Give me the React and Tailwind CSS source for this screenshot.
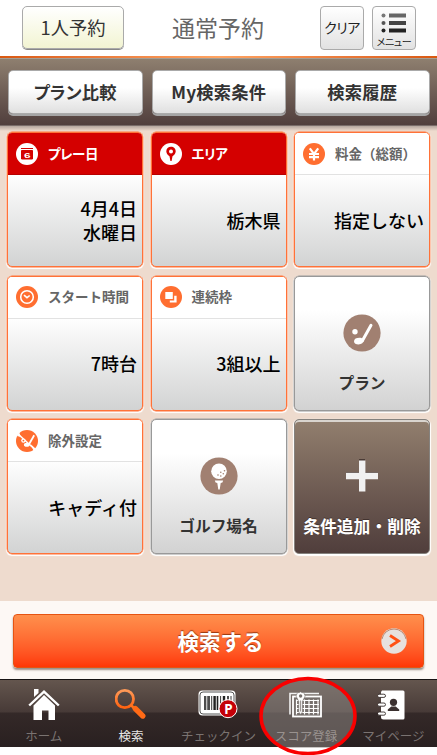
import React from 'react';

const CalendarIcon = () => (
  <svg viewBox="0 0 22 22" className="w-[22px] h-[22px]">
    <circle cx="11" cy="11" r="11" fill="#fff" />
    <path d="M5 5.5H17" stroke="#d40000" strokeWidth="1.2" />
    <path d="M5.5 7.5H16.5V16H5.5Z" fill="#d40000" stroke="#d40000" strokeWidth="1" />
    <text x="11" y="15" fill="#fff" fontSize="8" fontWeight="700" textAnchor="middle" textLength="6" lengthAdjust="spacingAndGlyphs" fontFamily="Liberation Sans, sans-serif">6</text>
  </svg>
);

const PinIcon = () => (
  <svg viewBox="0 0 22 22" className="w-[22px] h-[22px]">
    <circle cx="11" cy="11" r="11" fill="#fff" />
    <path fillRule="evenodd" d="M11 3.8C8.2 3.8 6.3 5.9 6.3 8.4C6.3 10.8 8.4 12.2 9.5 13.2L10.4 18H11.6L12.5 13.2C13.6 12.2 15.7 10.8 15.7 8.4C15.7 5.9 13.8 3.8 11 3.8ZM11 6.4A2 2 0 1 1 11 10.4A2 2 0 1 1 11 6.4Z" fill="#d40000" />
  </svg>
);

const YenIcon = () => (
  <svg viewBox="0 0 22 22" className="w-[22px] h-[22px]">
    <circle cx="11" cy="11" r="11" fill="#ff6e30" />
    <path d="M6.8 5.3L11 11L15.2 5.3M11 10.5V17.5M6 11H16M6 14.2H16" fill="none" stroke="#fff" strokeWidth="2.2" />
  </svg>
);

const ClockIcon = () => (
  <svg viewBox="0 0 22 22" className="w-[22px] h-[22px]">
    <circle cx="11" cy="11" r="11" fill="#ff6e30" />
    <circle cx="11" cy="11" r="6.3" fill="none" stroke="#fff" strokeWidth="1.6" />
    <path d="M8 9.2L11 11.7L13.7 9.5" fill="none" stroke="#fff" strokeWidth="1.6" />
  </svg>
);

const FramesIcon = () => (
  <svg viewBox="0 0 22 22" className="w-[22px] h-[22px]">
    <circle cx="11" cy="11" r="11" fill="#ff6e30" />
    <path d="M5.3 6H12.8V13H5.3Z" fill="#fff" />
    <path d="M14.2 9.8H16.6V16.4H9.8V14.4H14.2Z" fill="#fff" />
  </svg>
);

const ExcludeIcon = () => (
  <svg viewBox="0 0 22 22" className="w-[22px] h-[22px]">
    <circle cx="11" cy="11" r="11" fill="#ff6e30" />
    <path d="M1.5 3.5L20 20.5" stroke="#fff" strokeWidth="1.6" />
    <path d="M3 2L5 7L1 6Z" fill="#fff" />
    <path d="M18.2 5.2L13 14.2" stroke="#fff" strokeWidth="1.8" />
    <ellipse cx="10.8" cy="14.8" rx="2.9" ry="2" fill="#fff" />
    <circle cx="7.4" cy="10.6" r="2.2" fill="#fff" />
    <circle cx="7.4" cy="10.6" r="0.9" fill="#ff6e30" />
    <path d="M14.5 14L20.5 19.5L17.5 20.5Z" fill="#fff" />
  </svg>
);

const ClubIcon = () => (
  <svg viewBox="0 0 38 38" className="w-[38px] h-[38px]">
    <circle cx="19" cy="19" r="18.6" fill="#a18071" />
    <circle cx="12" cy="17.7" r="2.7" fill="#fff" />
    <path d="M28 11.2L19.5 26.5" stroke="#fff" strokeWidth="3" strokeLinecap="round" />
    <path d="M18.5 24C14.5 23.4 11 24.6 11 27.2C11 29.5 13 30.4 15.5 30.4C18.8 30.4 20.3 28.5 21 26.5Z" fill="#fff" />
  </svg>
);

const GolfBallIcon = () => (
  <svg viewBox="0 0 38 38" className="w-[38px] h-[38px]">
    <circle cx="19" cy="19" r="18.6" fill="#a18071" />
    <circle cx="19" cy="14.3" r="7.8" fill="#fff" />
    <g fill="#a18071">
      <circle cx="24.5" cy="13.8" r="0.8" />
      <circle cx="23.3" cy="16.8" r="0.8" />
      <circle cx="20.8" cy="15.3" r="0.8" />
      <circle cx="20.8" cy="19" r="0.8" />
      <circle cx="18" cy="18" r="0.8" />
    </g>
    <path d="M14.8 23.4H23.2L22.4 25.4L20.7 26L19.7 32.5H18.3L17.3 26L15.6 25.4Z" fill="#fff" />
  </svg>
);

const PlusIcon = () => (
  <svg viewBox="0 0 34 34" className="w-[34px] h-[34px]">
    <path d="M14 0H20V13H33V19H20V32H14V19H1V13H14Z" fill="#4a3b36" />
    <path d="M14 1.4H20.4V13.8H33V20.2H20.4V32.6H14V20.2H1V13.8H14Z" fill="#f1f1f1" />
  </svg>
);

const HomeIcon = () => (
  <svg viewBox="0 0 32 32" className="w-8 h-8">
    <path d="M6 1H10.5V5L6 9Z" fill="#fff" />
    <path d="M1.2 17.5L16 3.6L30.8 17.5" fill="none" stroke="#fff" strokeWidth="2.4" />
    <path d="M16 7L27 17.5V32H20.5V22.5H14V32H5.5V17.5Z" fill="#fff" />
  </svg>
);

const SearchIcon = () => (
  <svg viewBox="0 0 32 32" className="w-8 h-8">
    <defs>
      <linearGradient id="lens" x1="0" y1="0" x2="0" y2="1">
        <stop offset="0" stopColor="#ff9a58" />
        <stop offset="1" stopColor="#ff6210" />
      </linearGradient>
    </defs>
    <circle cx="9.8" cy="11" r="8.7" fill="none" stroke="url(#lens)" strokeWidth="2.8" />
    <path d="M15.8 17L19 20" stroke="#ff741f" strokeWidth="2.6" />
    <path d="M20.2 20.5L27.8 28" stroke="#ff6a16" strokeWidth="5.4" strokeLinecap="round" />
  </svg>
);

const CheckinIcon = () => (
  <svg viewBox="0 0 42 32" className="w-[42px] h-8">
    <rect x="0.5" y="2.5" width="37" height="25" rx="4" fill="#fff" />
    <rect x="2" y="4" width="34" height="22" rx="3" fill="none" stroke="#555" strokeWidth="1" />
    <path d="M7 8V22M11 8V22M19.5 8V22M30 8V22" stroke="#222" strokeWidth="1.6" />
    <path d="M9.2 8V22M13.7 8V22M22.6 8V22M33 8V22" stroke="#222" strokeWidth="0.9" />
    <path d="M16.6 8V22M26 8V22" stroke="#222" strokeWidth="2.4" />
    <circle cx="30" cy="20.7" r="9" fill="#c40008" stroke="#fff" strokeWidth="1" />
    <text x="30.4" y="25.6" fill="#fff" fontSize="13.5" fontWeight="700" textAnchor="middle" fontFamily="Noto Sans, sans-serif">P</text>
  </svg>
);

const ScoreIcon = () => (
  <svg viewBox="0 0 34 32" className="w-[34px] h-8">
    <path d="M1 26.5V5.5H30" fill="none" stroke="#f2f2f2" strokeWidth="1.6" />
    <rect x="4" y="8.5" width="28" height="20" fill="#77706d" stroke="#fff" strokeWidth="1.8" />
    <path d="M7 12.5H30M7 16.5H30M7 20.5H30M7 24.5H30" stroke="#fff" strokeWidth="1.2" />
    <path d="M7.5 11.5V26.5M15.5 11.5V26.5M20 11.5V26.5M24.5 11.5V26.5M29 11.5V26.5" stroke="#fff" strokeWidth="1.2" />
    <path d="M11.6 3.8Q13 5.2 14.6 4.4L16.2 8L13.4 13.5V24L11.6 26.5L9.8 24V13.5L7 8L8.6 4.4Q10.2 5.2 11.6 3.8Z" fill="#fff" stroke="#77706d" strokeWidth="0.6" />
    <circle cx="11.6" cy="8" r="1.7" fill="#77706d" />
    <path d="M11.6 12.5V23.5" stroke="#77706d" strokeWidth="0.8" />
  </svg>
);

const AddressIcon = () => (
  <svg viewBox="0 0 30 32" className="w-[30px] h-8">
    <path d="M4 2.5H25Q26.5 2.5 26.5 4V30Q26.5 31.5 25 31.5H5.5Q3 31.5 3 29V4Z" fill="#fff" />
    <g fill="#fff" stroke="#332a29" strokeWidth="0.9">
      <rect x="-0.5" y="6.2" width="8" height="3.2" rx="1.6" />
      <rect x="-0.5" y="15" width="8" height="3.2" rx="1.6" />
      <rect x="-0.5" y="24" width="8" height="3.2" rx="1.6" />
    </g>
    <circle cx="15.5" cy="14.3" r="3.6" fill="#3a302f" />
    <path d="M9.8 23V21.5L13.3 18.5H17.7L21.2 21.5V23Z" fill="#3a302f" />
  </svg>
);

const tabs = ['プラン比較', 'My検索条件', '検索履歴'];

const conditions = [
  { label: 'プレー日', icon: CalendarIcon, value: ['4月4日', '水曜日'], required: true },
  { label: 'エリア', icon: PinIcon, value: ['栃木県'], required: true },
  { label: '料金（総額）', icon: YenIcon, value: ['指定しない'] },
  { label: 'スタート時間', icon: ClockIcon, value: ['7時台'] },
  { label: '連続枠', icon: FramesIcon, value: ['3組以上'] },
  { label: 'プラン', icon: ClubIcon },
  { label: '除外設定', icon: ExcludeIcon, value: ['キャディ付'] },
  { label: 'ゴルフ場名', icon: GolfBallIcon },
];

const navItems = [
  { label: 'ホーム', icon: HomeIcon },
  { label: '検索', icon: SearchIcon, active: true },
  { label: 'チェックイン', icon: CheckinIcon },
  { label: 'スコア登録', icon: ScoreIcon, marked: true },
  { label: 'マイページ', icon: AddressIcon },
];

function ConditionCard({ item }) {
  const Icon = item.icon;
  if (!item.value) {
    return (
      <button className="flex flex-col items-center h-[135px] pt-[37px] rounded-[5px] border border-[#999] bg-linear-to-b from-white from-25% to-[#d2d2d2] shadow-[0_0_0_0.4px_#999,0_1px_1px_1px_#fff]">
        <Icon />
        <span className="mt-[21px] text-[15.7px] leading-[20px] font-bold text-[#333] whitespace-nowrap">{item.label}</span>
      </button>
    );
  }
  return (
    <button className="flex flex-col h-[135px] rounded-[5px] border border-[#ff7238] overflow-hidden bg-linear-to-b from-white from-30% to-[#d2d3d3] shadow-[0_0_0_0.4px_#ff7238,0_1px_1px_1px_#fff]">
      <div
        className={`flex items-center gap-[10px] w-full h-[42px] shrink-0 pl-[8px] border-b ${
          item.required
            ? 'bg-[#d40000] border-[#b80000] text-white tracking-[-0.4px] [font-feature-settings:"palt"]'
            : 'bg-white border-[#e2e2e2] text-[#666]'
        }`}
      >
        <Icon />
        <span className="text-[13.5px] leading-none font-bold whitespace-nowrap">{item.label}</span>
      </div>
      <div className="flex flex-1 flex-col items-end justify-center w-full pr-[5px] text-[18px] leading-[23.5px] font-medium text-black whitespace-nowrap">
        {item.value.map(line => (
          <span key={line}>{line}</span>
        ))}
      </div>
    </button>
  );
}

export default function App() {
  return (
    <div className="flex flex-col w-[437px] h-[755px] overflow-hidden bg-white font-['Noto_Sans_CJK_JP',sans-serif]">
      <header className="flex h-14 shrink-0 pl-[22px] pt-[6px]">
        <button className="flex items-center justify-center w-[102px] h-[43px] rounded-[5px] border border-[#aaa] bg-linear-to-b from-white to-[#f2f4d2] text-[18.3px] leading-none text-[#333] shadow-[0_1px_0_#888]">
          1人予約
        </button>
        <h1 className="w-[196px] pl-[48px] pt-[8px] text-[23px] leading-[26px] font-normal text-[#666] whitespace-nowrap">通常予約</h1>
        <button className="flex items-center justify-center w-[44px] h-[44px] pb-[3px] rounded-[4px] border border-[#aaa] bg-linear-to-b from-white to-[#e2e2e2] text-[14px] leading-none tracking-[-0.4px] text-[#222] [font-feature-settings:'palt']">
          クリア
        </button>
        <button className="flex flex-col items-center w-[44px] h-[44px] ml-2 pt-[6px] rounded-[4px] border border-[#aaa] bg-linear-to-b from-white to-[#e2e2e2]">
          <svg viewBox="0 0 26 20" className="w-[26px] h-5">
            <circle cx="2.5" cy="2.5" r="2" fill="#777" />
            <circle cx="2.5" cy="10" r="2" fill="#555" />
            <circle cx="2.5" cy="17.5" r="2" fill="#222" />
            <path d="M8 2.5H25" stroke="#666" strokeWidth="4" />
            <path d="M8 10H25" stroke="#444" strokeWidth="4" />
            <path d="M8 17.5H25" stroke="#222" strokeWidth="4" />
          </svg>
          <span className="mt-[3px] text-[10px] leading-[11px] tracking-[-0.4px] text-[#222] whitespace-nowrap [font-feature-settings:'palt']">メニュー</span>
        </button>
      </header>

      <div className="h-[2px] shrink-0 bg-linear-to-r from-[#d9580f] via-[#ffa462] to-[#d9580f]" />
      <nav className="flex gap-[9px] h-[68px] shrink-0 pl-2 pt-[11px] border-t border-b border-t-[#a59d92] border-b-[#796c69] bg-linear-to-b from-[#8e7f6f] to-[#513f3d]">
        {tabs.map(tab => (
          <button
            key={tab}
            className='flex items-center justify-center w-[134.5px] h-[44px] rounded-[5px] border border-[#aaa] bg-linear-to-b from-white from-40% to-[#e0e0e0] text-[17.3px] leading-none tracking-[0.2px] font-bold text-[#333] shadow-[0_2px_0_#a5a5a5] [font-feature-settings:"palt"]'
          >
            {tab}
          </button>
        ))}
      </nav>

      <main className="h-[475px] shrink-0 bg-[linear-gradient(to_bottom,#b3a59d_0,#eedbce_5px)] pl-[7px] pt-[6px]">
        <div className="grid grid-cols-[repeat(3,136px)] gap-x-[7.5px] gap-y-[8.5px]">
          {conditions.map(item => (
            <ConditionCard key={item.label} item={item} />
          ))}
          <button className="flex flex-col items-center h-[135px] pt-[39px] rounded-[5px] border border-[#85827e] bg-linear-to-b from-[#927f6e] to-[#503e3c] shadow-[inset_0_2px_0_#d9d4ce,0_1px_1px_1px_#fff]">
            <PlusIcon />
            <span className="mt-[23px] text-[16.8px] leading-[20px] font-bold text-white whitespace-nowrap [text-shadow:0_-1px_0_#42332f]">条件追加・削除</span>
          </button>
        </div>
      </main>

      <section className="h-[78px] shrink-0 bg-[#fdf8f5] px-[13px] pt-[13px]">
        <button className="flex items-center w-full h-[54px] rounded-[4px] border border-[#e65312] bg-linear-to-b from-[#ff8f4c] to-[#ff3605] pl-[30px] pr-[16px] shadow-[0_2px_2px_#9c8e86]">
          <span className="flex-1 pl-4 text-center text-[21.5px] leading-none font-bold text-white [text-shadow:0_-1px_1px_#963810]">検索する</span>
          <svg viewBox="0 0 26 26" className="w-[26px] h-[26px]">
            <circle cx="13" cy="13" r="12.7" fill="#e7e1de" />
            <path d="M1 11A12.2 12.2 0 0 1 25 11" fill="none" stroke="#b98a75" strokeWidth="1" />
            <path d="M9 7.5L17.5 13L9 18.5" fill="none" stroke="#ff5115" strokeWidth="2.8" />
          </svg>
        </button>
      </section>

      <footer className="flex h-[68px] shrink-0 border-t border-[#171313] bg-[linear-gradient(to_bottom,#64564e_0%,#473a37_48%,#342928_49%,#292020_100%)]">
        {navItems.map(item => {
          const Icon = item.icon;
          return (
            <button key={item.label} className="relative flex flex-col items-center flex-1 pt-[8px]">
              {item.marked && (
                <svg viewBox="0 0 102 82" className="absolute left-[-6px] top-[-5px] w-[102px] h-[82px] max-w-none">
                  <defs>
                    <clipPath id="inBar"><rect x="0" y="4" width="102" height="69" /></clipPath>
                  </defs>
                  <ellipse cx="52" cy="41" rx="47" ry="37.5" fill="#948e8a" fillOpacity="0.5" clipPath="url(#inBar)" />
                  <ellipse cx="52" cy="41" rx="47" ry="37.5" fill="none" stroke="#f90000" strokeWidth="3.5" />
                </svg>
              )}
              <div className="relative"><Icon /></div>
              <span
                className={`relative mt-[8px] text-[12.5px] leading-[16px] whitespace-nowrap ${
                  item.active ? 'text-[#e6e6e6]' : item.marked ? 'text-[#99928f]' : 'text-[#7a7371]'
                }`}
              >
                {item.label}
              </span>
            </button>
          );
        })}
      </footer>
    </div>
  );
}
